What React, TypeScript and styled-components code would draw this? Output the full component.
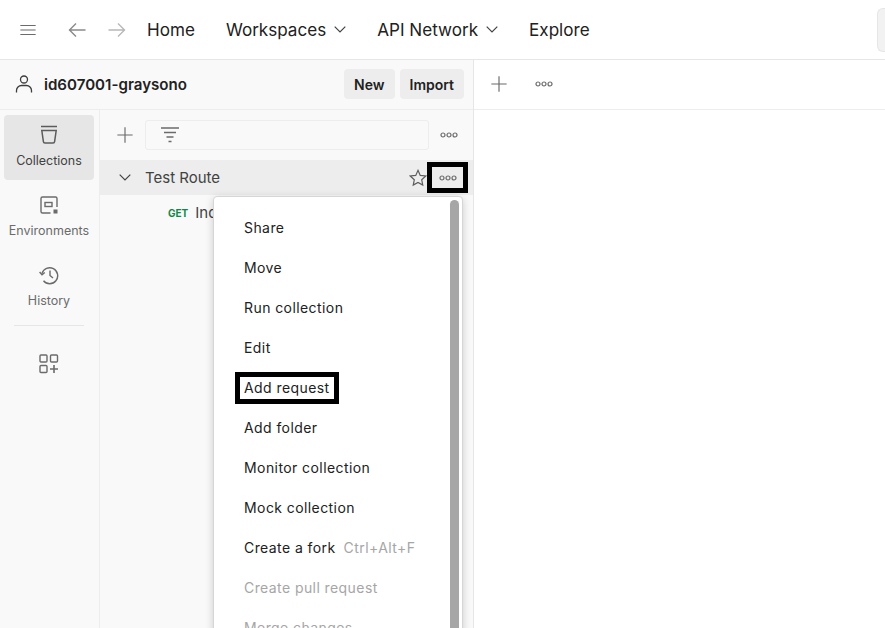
import React from "react";
import styled, { createGlobalStyle } from "styled-components";

const GlobalStyle = createGlobalStyle`
  html, body {
    margin: 0;
    padding: 0;
    background: #fff;
  }
  body {
    font-family: Inter, "Liberation Sans", sans-serif;
    color: #212121;
  }
  * {
    box-sizing: border-box;
  }
`;

const Icon: React.FC<{ size?: number; color?: string; children: React.ReactNode }> = ({
  size = 20,
  color = "#6b6b6b",
  children,
}) => (
  <svg
    width={size}
    height={size}
    viewBox="0 0 20 20"
    fill="none"
    stroke={color}
    strokeWidth="1.3"
    style={{ display: "block", flex: "none" }}
  >
    {children}
  </svg>
);

const Dots: React.FC = () => (
  <svg width="18" height="6" viewBox="0 0 18 6" fill="none" stroke="#6b6b6b" strokeWidth="1.2" style={{ display: "block" }}>
    <circle cx="3" cy="3" r="2" />
    <circle cx="9" cy="3" r="2" />
    <circle cx="15" cy="3" r="2" />
  </svg>
);

const Chevron: React.FC = () => (
  <svg width="12" height="7" viewBox="0 0 12 7" fill="none" stroke="#424242" strokeWidth="1.2" style={{ display: "block", flex: "none" }}>
    <path d="M.7.7L6 6l5.300-5.300" />
  </svg>
);

const Plus: React.FC = () => (
  <Icon size={18} color="#6b6b6b">
    <path d="M10 1.500v17M1.500 10h17" strokeWidth="1.300" />
  </Icon>
);

const NAV = [
  { label: "Home" },
  { label: "Workspaces", menu: true },
  { label: "API Network", menu: true },
  { label: "Explore" },
];

const MENU = [
  { label: "Share" },
  { label: "Move" },
  { label: "Run collection" },
  { label: "Edit" },
  { label: "Add request", marked: true },
  { label: "Add folder" },
  { label: "Monitor collection" },
  { label: "Mock collection" },
  { label: "Create a fork", hint: "Ctrl+Alt+F" },
  { label: "Create pull request", disabled: true },
  { label: "Merge changes", disabled: true },
];

export default function App() {
  return (
    <Page>
      <GlobalStyle />
      <TopBar>
        <Burger>
          <Icon size={18}>
            <path d="M1.500 5h17M1.500 10h17M1.500 15h17" />
          </Icon>
        </Burger>
        <Arrow>
          <Icon size={20} color="#8a8a8a">
            <path d="M18.500 10H2M9 3.500L2.500 10 9 16.500" strokeWidth="1.400" />
          </Icon>
        </Arrow>
        <Arrow>
          <Icon size={20} color="#b8b8b8">
            <path d="M1.500 10H18M11 3.500l6.500 6.500-6.500 6.500" strokeWidth="1.400" />
          </Icon>
        </Arrow>
        <Nav>
          {NAV.map((item) => (
            <NavItem key={item.label}>
              {item.label}
              {item.menu && <Chevron />}
            </NavItem>
          ))}
        </Nav>
        <SearchStub />
      </TopBar>

      <Body>
        <LeftPanel>
          <WorkspaceBar>
            <Icon size={20} color="#3d3d3d">
              <circle cx="10" cy="5.500" r="3.500" />
              <path d="M2.500 18.500v-2a5 5 0 0 1 5-5h5a5 5 0 0 1 5 5v2" />
            </Icon>
            <WorkspaceName>id607001-graysono</WorkspaceName>
            <GreyButton>New</GreyButton>
            <GreyButton>Import</GreyButton>
          </WorkspaceBar>

          <Columns>
            <Sidebar>
              <SideItem $active>
                <Icon size={20} color="#5c5c5c">
                  <path d="M2 1.500h16M2.800 5.500h14.400l-1.600 11.200a1.500 1.500 0 0 1-1.500 1.300H5.900a1.500 1.500 0 0 1-1.500-1.300z" strokeWidth="1.500" />
                </Icon>
                Collections
              </SideItem>
              <SideItem>
                <Icon size={20}>
                  <path d="M11.500 18H3.500A1.500 1.500 0 0 1 2 16.500v-13A1.500 1.500 0 0 1 3.500 2h13A1.500 1.500 0 0 1 18 3.500V12" strokeWidth="1.400" />
                  <rect x="6" y="7.500" width="7" height="4" strokeWidth="1.400" />
                  <rect x="14.500" y="14.500" width="4" height="4" fill="#6b6b6b" stroke="none" />
                </Icon>
                Environments
              </SideItem>
              <SideItem>
                <Icon size={20}>
                  <path d="M3 8.500A8 8 0 1 1 4.500 15.800" strokeWidth="1.400" />
                  <path d="M.6 7l2.400 2.800L5.800 7.500" strokeWidth="1.400" />
                  <path d="M11 5.500V10.500l3 2.500" strokeWidth="1.400" />
                </Icon>
                History
              </SideItem>
              <SideDivider />
              <AddOn>
                <Icon size={20}>
                  <rect x="1" y="1" width="7" height="7" rx="1" strokeWidth="1.400" />
                  <rect x="11.500" y="1" width="7" height="7" rx="1" strokeWidth="1.400" />
                  <rect x="1" y="11.500" width="7" height="7" rx="1" strokeWidth="1.400" />
                  <path d="M15 11v8M11 15h8" strokeWidth="1.600" />
                </Icon>
              </AddOn>
            </Sidebar>

            <TreePanel>
              <FilterRow>
                <Plus />
                <FilterInput>
                  <Icon size={20}>
                    <path d="M1 3h18M4 7.500h12M6.500 12h7M8.500 16.500h3" />
                  </Icon>
                </FilterInput>
                <Dots />
              </FilterRow>
              <CollectionRow>
                <Chevron />
                <CollectionName>Test Route</CollectionName>
                <Icon size={18} color="#5c5c5c">
                  <path d="M10 1.500l2.500 5.600 6.100.7-4.500 4.100 1.200 6L10 15l-5.300 2.900 1.200-6-4.500-4.100 6.100-.7z" />
                </Icon>
                <MarkedDots>
                  <Dots />
                </MarkedDots>
              </CollectionRow>
              <RequestRow>
                <Method>GET</Method>
                <RequestName>Index</RequestName>
              </RequestRow>

              <Menu>
                {MENU.map((item) => (
                  <MenuItem key={item.label} $disabled={item.disabled}>
                    <MenuLabel $marked={item.marked}>{item.label}</MenuLabel>
                    {item.hint && <MenuHint>{item.hint}</MenuHint>}
                  </MenuItem>
                ))}
                <Thumb />
              </Menu>
            </TreePanel>
          </Columns>
        </LeftPanel>

        <RightPanel>
          <TabBar>
            <Plus />
            <Dots />
          </TabBar>
        </RightPanel>
      </Body>
    </Page>
  );
}

const Page = styled.div`
  width: 885px;
  height: 628px;
  overflow: hidden;
  display: flex;
  flex-direction: column;
  background: #fff;
`;

const TopBar = styled.div`
  height: 60px;
  flex: none;
  display: flex;
  align-items: center;
  border-bottom: 1px solid #e6e6e6;
`;

const Burger = styled.div`
  margin-left: 19px;
  margin-right: 30px;
`;

const Arrow = styled.div`
  margin-right: 20px;
`;

const Nav = styled.div`
  display: flex;
  align-items: center;
  gap: 31px;
`;

const NavItem = styled.div`
  display: flex;
  align-items: center;
  gap: 8px;
  font-size: 17.100px;
  color: #212121;
`;

const SearchStub = styled.div`
  margin-left: auto;
  flex: none;
  width: 8px;
  height: 44px;
  background: #f2f2f2;
  border: 1px solid #e6e6e6;
  border-right: none;
  border-radius: 6px 0 0 6px;
`;

const Body = styled.div`
  flex: 1;
  min-height: 0;
  display: flex;
`;

const LeftPanel = styled.div`
  width: 474px;
  flex: none;
  display: flex;
  flex-direction: column;
  background: #f9f9f9;
  border-right: 1px solid #e6e6e6;
`;

const WorkspaceBar = styled.div`
  height: 50px;
  flex: none;
  display: flex;
  align-items: center;
  padding: 0 9px 1px 14px;
  gap: 5px;
  border-bottom: 1px solid #ededed;
`;

const WorkspaceName = styled.div`
  flex: 1;
  margin-left: 5px;
  font-size: 15.100px;
  font-weight: 600;
  color: #212121;
`;

const GreyButton = styled.div`
  height: 30px;
  padding: 0 10px;
  display: flex;
  align-items: center;
  border-radius: 4px;
  background: #ededed;
  font-size: 14px;
  font-weight: 600;
  color: #212121;
`;

const Columns = styled.div`
  flex: 1;
  min-height: 0;
  display: flex;
`;

const Sidebar = styled.div`
  width: 100px;
  flex: none;
  padding: 5px 0 0 4px;
  display: flex;
  flex-direction: column;
  align-items: flex-start;
  border-right: 1px solid #ededed;
`;

const SideItem = styled.div<{ $active?: boolean }>`
  width: 90px;
  height: 65px;
  margin-bottom: 5px;
  padding-bottom: 2px;
  display: flex;
  flex-direction: column;
  align-items: center;
  justify-content: center;
  gap: 8px;
  border-radius: 4px;
  font-size: 12.500px;
  color: ${(p) => (p.$active ? "#424242" : "#6b6b6b")};
  background: ${(p) => (p.$active ? "#e6e6e6" : "transparent")};
`;

const SideDivider = styled.div`
  width: 70px;
  height: 1px;
  margin-left: 10px;
  background: #e6e6e6;
`;

const AddOn = styled.div`
  margin: 28px 0 0 35px;
`;

const TreePanel = styled.div`
  position: relative;
  flex: 1;
  min-width: 0;
`;

const FilterRow = styled.div`
  height: 50px;
  display: flex;
  align-items: center;
  padding: 0 15px 0 16px;
`;

const FilterInput = styled.div`
  width: 284px;
  height: 30px;
  margin: 0 11px 0 11px;
  padding-left: 14px;
  display: flex;
  align-items: center;
  border: 1px solid #ededed;
  border-radius: 3px;
`;

const CollectionRow = styled.div`
  height: 35px;
  display: flex;
  align-items: center;
  padding-left: 19px;
  background: #ededed;
`;

const CollectionName = styled.div`
  flex: 1;
  margin-left: 14px;
  font-size: 15px;
  color: #424242;
`;

const MarkedDots = styled.div`
  width: 41px;
  height: 31px;
  margin: 0 5px 0 0;
  display: flex;
  align-items: center;
  justify-content: center;
  border: 5px solid #000;
  background: #ededed;
`;

const RequestRow = styled.div`
  height: 35px;
  display: flex;
  align-items: center;
  padding-left: 68px;
  gap: 7px;
`;

const Method = styled.span`
  font-size: 10px;
  font-weight: 700;
  color: #0f8a46;
`;

const RequestName = styled.span`
  font-size: 15px;
  color: #424242;
`;

const Menu = styled.div`
  position: absolute;
  left: 113px;
  top: 86px;
  width: 250px;
  height: 480px;
  padding-top: 10px;
  background: #fff;
  border: 1px solid #d6d6d6;
  border-radius: 4px;
  box-shadow: 0 2px 8px rgba(0, 0, 0, 0.18);
`;

const MenuItem = styled.div<{ $disabled?: boolean }>`
  height: 40px;
  display: flex;
  align-items: center;
  padding-left: 30px;
  font-size: 14px;
  letter-spacing: 0.42px;
  color: ${(p) => (p.$disabled ? "#a6a6a6" : "#212121")};
`;

const MenuLabel = styled.span<{ $marked?: boolean }>`
  position: relative;
  ${(p) =>
    p.$marked &&
    `
    &::after {
      content: "";
      position: absolute;
      left: -9px;
      right: -9px;
      top: -7px;
      bottom: -8px;
      border: 5px solid #000;
    }
  `}
`;

const MenuHint = styled.span`
  margin-left: 8px;
  color: #a6a6a6;
`;

const Thumb = styled.div`
  position: absolute;
  right: 3px;
  top: 3px;
  width: 9px;
  height: 500px;
  border-radius: 5px 5px 0 0;
  background: #a6a6a6;
`;

const RightPanel = styled.div`
  flex: 1;
  min-width: 0;
  background: #fff;
`;

const TabBar = styled.div`
  height: 50px;
  display: flex;
  align-items: center;
  gap: 27px;
  padding: 0 0 1px 16px;
  border-bottom: 1px solid #ededed;
`;
